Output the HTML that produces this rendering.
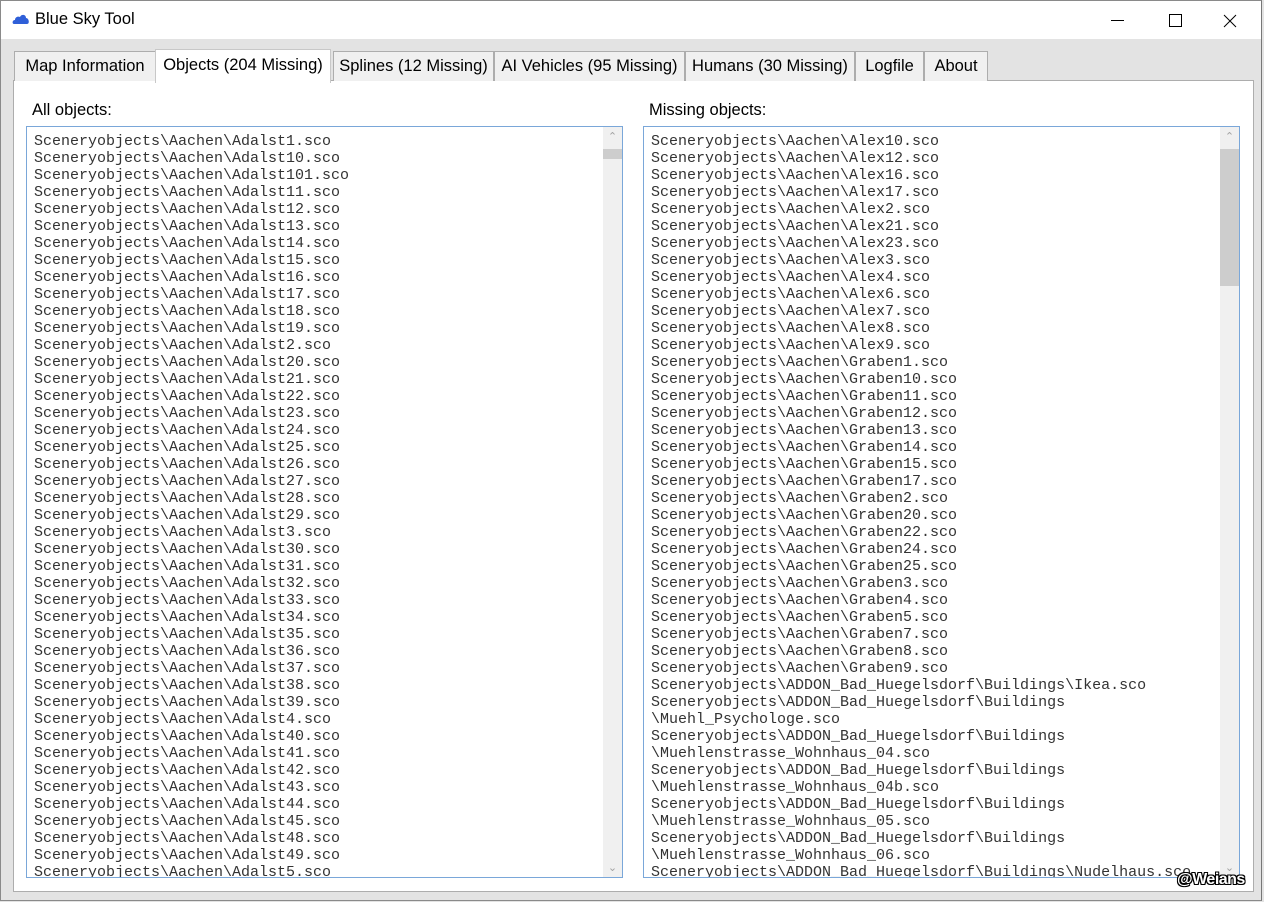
<!DOCTYPE html>
<html><head><style>
body{margin:0;width:1264px;height:902px;background:#e3e3e3;position:relative;overflow:hidden;font-family:"Liberation Sans",sans-serif}
.win{position:absolute;left:0;top:0;width:1262px;height:901px;border:1px solid #8a8a8a;border-right-color:#777;box-sizing:border-box;background:#e3e3e3}
.title{position:absolute;left:0;top:0;right:0;height:38px;background:#fff}
.title span{position:absolute;left:34px;top:9px;font-size:16.5px;color:#000}
.tab{position:absolute;top:50px;height:30px;border:1px solid #adadad;border-bottom:none;background:#f0f0f0;box-sizing:border-box;font-size:16.5px;text-align:center;line-height:29px;color:#000}
.tab.act{top:48px;height:34px;background:#fff;line-height:30px;z-index:2;border-color:#c8c8c8}
.panel{position:absolute;left:12px;top:79px;width:1241px;height:812px;background:#fff;border:1px solid #adadad;box-sizing:border-box}
.lbl{position:absolute;top:100px;font-size:16.5px;color:#000}
.list{position:absolute;top:125px;width:597px;height:752px;border:1px solid #7aa7d9;box-sizing:border-box;background:#fff;overflow:hidden}
.list pre{margin:0;position:absolute;left:7px;top:6px;font-family:"Liberation Mono",monospace;font-size:15px;line-height:17px;color:#333}
.sb{position:absolute;right:0;top:0;width:19px;height:100%;background:#f0f0f0}
.thumb{position:absolute;width:19px;background:#cdcdcd;left:0}
.arr{position:absolute;left:0;width:19px;text-align:center;font-size:11px;color:#a3a3a3}
</style></head><body>
<div class="win">
<div class="title">
<svg style="position:absolute;left:11px;top:12px" width="18" height="12" viewBox="0 0 18 12"><path d="M2 11 C0 11 0 7 3 7 C3 4 6 3 8 4 C9 1 14 1 14 5 C17 5 18 11 15 11 Z" fill="#2f5fd8"/></svg>
<span>Blue Sky Tool</span>
<svg style="position:absolute;left:1110px;top:13px" width="140" height="14" viewBox="0 0 140 14"><path d="M0 6.5H13" stroke="#000" stroke-width="1"/><path d="M58.5 0.5H70.5V12.5H58.5Z" stroke="#000" fill="none"/><path d="M113 1L125 13M125 1L113 13" stroke="#000" stroke-width="1"/></svg>
</div>
<div class="panel"></div>
<div class="tab" style="left:13px;width:142px">Map Information</div>
<div class="tab act" style="left:154px;width:176px">Objects (204 Missing)</div>
<div class="tab" style="left:332px;width:161px">Splines (12 Missing)</div>
<div class="tab" style="left:493px;width:191px">AI Vehicles (95 Missing)</div>
<div class="tab" style="left:684px;width:170px">Humans (30 Missing)</div>
<div class="tab" style="left:854px;width:69px">Logfile</div>
<div class="tab" style="left:923px;width:64px">About</div>
<div class="lbl" style="left:31px">All objects:</div>
<div class="lbl" style="left:648px">Missing objects:</div>
<div class="list" style="left:25px"><pre>Sceneryobjects\Aachen\Adalst1.sco
Sceneryobjects\Aachen\Adalst10.sco
Sceneryobjects\Aachen\Adalst101.sco
Sceneryobjects\Aachen\Adalst11.sco
Sceneryobjects\Aachen\Adalst12.sco
Sceneryobjects\Aachen\Adalst13.sco
Sceneryobjects\Aachen\Adalst14.sco
Sceneryobjects\Aachen\Adalst15.sco
Sceneryobjects\Aachen\Adalst16.sco
Sceneryobjects\Aachen\Adalst17.sco
Sceneryobjects\Aachen\Adalst18.sco
Sceneryobjects\Aachen\Adalst19.sco
Sceneryobjects\Aachen\Adalst2.sco
Sceneryobjects\Aachen\Adalst20.sco
Sceneryobjects\Aachen\Adalst21.sco
Sceneryobjects\Aachen\Adalst22.sco
Sceneryobjects\Aachen\Adalst23.sco
Sceneryobjects\Aachen\Adalst24.sco
Sceneryobjects\Aachen\Adalst25.sco
Sceneryobjects\Aachen\Adalst26.sco
Sceneryobjects\Aachen\Adalst27.sco
Sceneryobjects\Aachen\Adalst28.sco
Sceneryobjects\Aachen\Adalst29.sco
Sceneryobjects\Aachen\Adalst3.sco
Sceneryobjects\Aachen\Adalst30.sco
Sceneryobjects\Aachen\Adalst31.sco
Sceneryobjects\Aachen\Adalst32.sco
Sceneryobjects\Aachen\Adalst33.sco
Sceneryobjects\Aachen\Adalst34.sco
Sceneryobjects\Aachen\Adalst35.sco
Sceneryobjects\Aachen\Adalst36.sco
Sceneryobjects\Aachen\Adalst37.sco
Sceneryobjects\Aachen\Adalst38.sco
Sceneryobjects\Aachen\Adalst39.sco
Sceneryobjects\Aachen\Adalst4.sco
Sceneryobjects\Aachen\Adalst40.sco
Sceneryobjects\Aachen\Adalst41.sco
Sceneryobjects\Aachen\Adalst42.sco
Sceneryobjects\Aachen\Adalst43.sco
Sceneryobjects\Aachen\Adalst44.sco
Sceneryobjects\Aachen\Adalst45.sco
Sceneryobjects\Aachen\Adalst48.sco
Sceneryobjects\Aachen\Adalst49.sco
Sceneryobjects\Aachen\Adalst5.sco</pre>
<div class="sb"><div class="arr" style="top:3px">&#8963;</div><div class="thumb" style="top:22px;height:10px"></div><div class="arr" style="bottom:3px">&#8964;</div></div></div>
<div class="list" style="left:642px"><pre>Sceneryobjects\Aachen\Alex10.sco
Sceneryobjects\Aachen\Alex12.sco
Sceneryobjects\Aachen\Alex16.sco
Sceneryobjects\Aachen\Alex17.sco
Sceneryobjects\Aachen\Alex2.sco
Sceneryobjects\Aachen\Alex21.sco
Sceneryobjects\Aachen\Alex23.sco
Sceneryobjects\Aachen\Alex3.sco
Sceneryobjects\Aachen\Alex4.sco
Sceneryobjects\Aachen\Alex6.sco
Sceneryobjects\Aachen\Alex7.sco
Sceneryobjects\Aachen\Alex8.sco
Sceneryobjects\Aachen\Alex9.sco
Sceneryobjects\Aachen\Graben1.sco
Sceneryobjects\Aachen\Graben10.sco
Sceneryobjects\Aachen\Graben11.sco
Sceneryobjects\Aachen\Graben12.sco
Sceneryobjects\Aachen\Graben13.sco
Sceneryobjects\Aachen\Graben14.sco
Sceneryobjects\Aachen\Graben15.sco
Sceneryobjects\Aachen\Graben17.sco
Sceneryobjects\Aachen\Graben2.sco
Sceneryobjects\Aachen\Graben20.sco
Sceneryobjects\Aachen\Graben22.sco
Sceneryobjects\Aachen\Graben24.sco
Sceneryobjects\Aachen\Graben25.sco
Sceneryobjects\Aachen\Graben3.sco
Sceneryobjects\Aachen\Graben4.sco
Sceneryobjects\Aachen\Graben5.sco
Sceneryobjects\Aachen\Graben7.sco
Sceneryobjects\Aachen\Graben8.sco
Sceneryobjects\Aachen\Graben9.sco
Sceneryobjects\ADDON_Bad_Huegelsdorf\Buildings\Ikea.sco
Sceneryobjects\ADDON_Bad_Huegelsdorf\Buildings
\Muehl_Psychologe.sco
Sceneryobjects\ADDON_Bad_Huegelsdorf\Buildings
\Muehlenstrasse_Wohnhaus_04.sco
Sceneryobjects\ADDON_Bad_Huegelsdorf\Buildings
\Muehlenstrasse_Wohnhaus_04b.sco
Sceneryobjects\ADDON_Bad_Huegelsdorf\Buildings
\Muehlenstrasse_Wohnhaus_05.sco
Sceneryobjects\ADDON_Bad_Huegelsdorf\Buildings
\Muehlenstrasse_Wohnhaus_06.sco
Sceneryobjects\ADDON_Bad_Huegelsdorf\Buildings\Nudelhaus.sco</pre>
<div class="sb"><div class="arr" style="top:3px">&#8963;</div><div class="thumb" style="top:22px;height:137px"></div><div class="arr" style="bottom:3px">&#8964;</div></div></div>
<div style="position:absolute;left:1176px;top:870px;font-size:16px;font-weight:bold;color:#fff;line-height:18px;letter-spacing:-0.5px;text-shadow:1px 0 #000,-1px 0 #000,0 1px #000,0 -1px #000,1px 1px #000,-1px -1px #000,1px -1px #000,-1px 1px #000">@Weians</div>
</div>
</body></html>
